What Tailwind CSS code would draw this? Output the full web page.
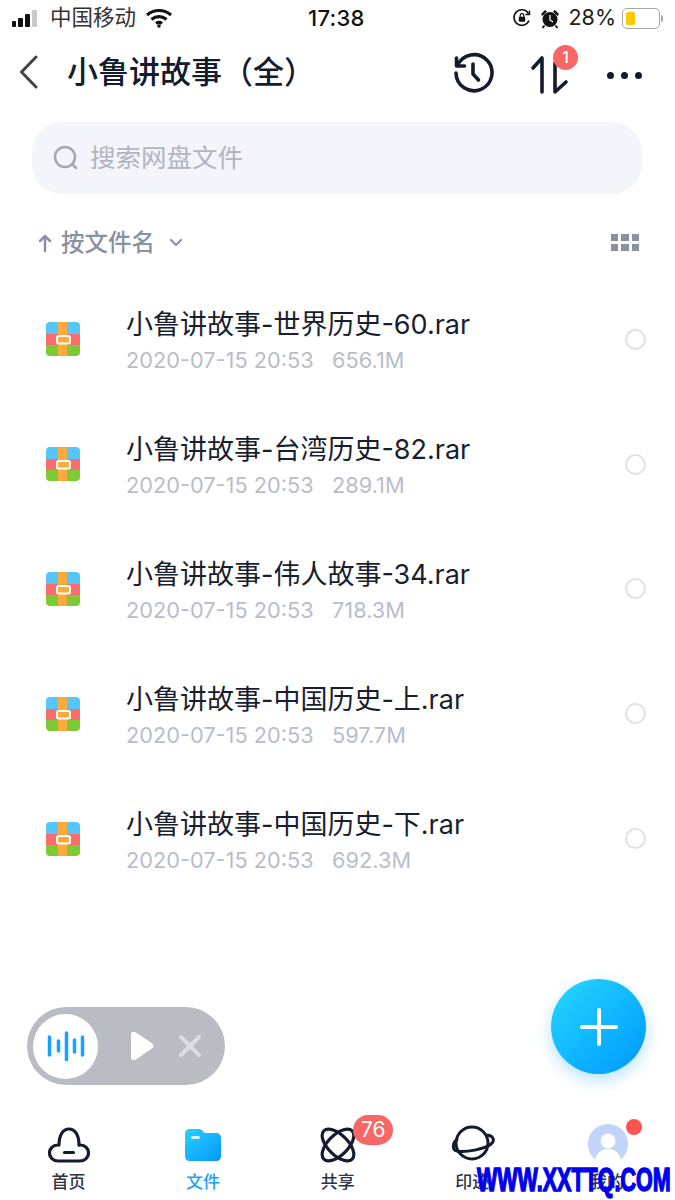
<!DOCTYPE html>
<html lang="zh-CN">
<head>
    <meta charset="UTF-8">
    <meta name="viewport" content="width=device-width, initial-scale=1.0">
    <title>小鲁讲故事（全）</title>
    <script src="https://cdn.jsdelivr.net/npm/@tailwindcss/browser@4"></script>
</head>
<body class="bg-white font-['Inter','Noto_Sans_CJK_SC',sans-serif] text-[#151b2e]">
<div class="relative w-[675px] h-[1200px] overflow-hidden">

    <!-- Status bar -->
    <div class="h-[36px] pl-[12px] pr-[12px] flex items-center relative text-[#1c1c1e]">
        <div class="flex items-end gap-[2px] h-[17px] w-[30px]">
            <span class="w-[4px] h-[6px] rounded-[1px] bg-[#111]"></span>
            <span class="w-[5px] h-[9px] rounded-[1px] bg-[#111]"></span>
            <span class="w-[5px] h-[13px] rounded-[1px] bg-[#111]"></span>
            <span class="w-[5px] h-[17px] rounded-[1px] bg-[#c9c9c9]"></span>
        </div>
        <span class="ml-[8px] text-[21.500px] leading-none text-[#333]">中国移动</span>
        <svg class="ml-[9px]" width="28" height="20" viewBox="0 0 28 20" fill="none" stroke="#111" stroke-width="3.2">
            <path d="M2 7c7-6 17-6 24 0"/><path d="M6.500 11.500c4.500-3.800 10.500-3.800 15 0"/><path d="M11 15.500c2-1.500 4-1.500 6 0"/><circle cx="14" cy="18" r="1" fill="#111" stroke-width="1.500"/>
        </svg>
        <span class="absolute left-[308px] top-[6px] text-[22px] leading-[24px] font-medium tracking-[0.3px] text-[#111]">17:38</span>
        <div class="ml-auto flex items-center">
            <svg width="20" height="20" viewBox="0 0 20 20" fill="none" stroke="#111" stroke-width="1.600">
                <path d="M17 12.500A7.800 7.800 0 1 1 16.500 5.500"/><path d="M17.500 2.500v4h-4" stroke-width="1.400"/><rect x="6.800" y="8.800" width="6.400" height="5" rx="1" fill="#111" stroke="none"/><path d="M8.200 9V7.500a1.800 1.800 0 0 1 3.600 0V9" stroke-width="1.200"/>
            </svg>
            <svg class="ml-[8px]" width="20" height="21" viewBox="0 0 20 21" fill="#111">
                <circle cx="10" cy="11.500" r="7.500"/><path d="M1 6l4-4 2 1.500-4.500 4.500zM19 6l-4-4-2 1.500 4.500 4.500z"/><path d="M10 7v5l3 2" stroke="#fff" stroke-width="1.300" fill="none"/><path d="M4.500 17.500l-2 2.500M15.500 17.500l2 2.500" stroke="#111" stroke-width="1.800"/>
            </svg>
            <span class="ml-[8px] text-[21.500px] leading-none text-[#222]">28%</span>
            <div class="ml-[6px] w-[38px] h-[21px] rounded-[5px] border-[1.500px] border-[#a8a8a8] p-[3px]">
                <div class="w-[9px] h-full rounded-[2px] bg-[#fcc800]"></div>
            </div>
            <span class="ml-[1px] w-[2px] h-[7px] rounded-r-[2px] bg-[#a8a8a8]"></span>
        </div>
    </div>

    <!-- Title bar -->
    <div class="h-[72px] flex items-center relative">
        <svg class="ml-[18px]" width="22" height="34" viewBox="0 0 22 34" fill="none" stroke="#444" stroke-width="3" stroke-linecap="round" stroke-linejoin="round">
            <path d="M18 2L3.500 17 18 32"/>
        </svg>
        <h1 class="ml-[27px] text-[31px] leading-none font-medium -translate-y-[1px]">小鲁讲故事（全）</h1>
        <svg class="absolute left-[452px] top-[15px]" width="44" height="44" viewBox="0 0 44 44" fill="none" stroke="#151b2e" stroke-width="3.600" stroke-linecap="round" stroke-linejoin="round">
            <path d="M5.500 14.500A18 18 0 1 1 4 22"/><path d="M4.500 7v8h8"/><path d="M21 13v10l5.500 6"/>
        </svg>
        <svg class="absolute left-[530px] top-[19px]" width="40" height="44" viewBox="0 0 40 44" fill="none" stroke="#151b2e" stroke-width="3.600" stroke-linecap="round" stroke-linejoin="round">
            <path d="M3 13L12 3V37"/><path d="M25 8V37L36 27"/>
        </svg>
        <span class="absolute left-[553px] top-[9px] w-[25px] h-[25px] rounded-full bg-[#f96666] text-white text-[16px] font-medium leading-[25px] text-center">1</span>
        <div class="absolute left-[607px] top-[36px] flex gap-[7.500px]">
            <span class="w-[6.500px] h-[6.500px] rounded-full bg-[#151b2e]"></span>
            <span class="w-[6.500px] h-[6.500px] rounded-full bg-[#151b2e]"></span>
            <span class="w-[6.500px] h-[6.500px] rounded-full bg-[#151b2e]"></span>
        </div>
    </div>

    <!-- Search -->
    <div class="mx-[32px] mt-[14px] w-[610px] h-[72px] rounded-[30px] bg-[#f3f5fa] flex items-center pl-[20px]">
        <svg width="28" height="28" viewBox="0 0 28 28" fill="none" stroke="#a2a8b6" stroke-width="2.500" stroke-linecap="round">
            <circle cx="13" cy="13" r="10"/><path d="M21 21l3 3"/>
        </svg>
        <span class="ml-[10px] text-[25.500px] leading-none text-[#b0b5c2]">搜索网盘文件</span>
    </div>

    <!-- Sort row -->
    <div class="h-[42px] mt-[28px] pl-[38px] pr-[36px] flex items-center text-[#8b91a3]">
        <svg width="14" height="20" viewBox="0 0 14 20" fill="none" stroke="#8b91a3" stroke-width="2.500" stroke-linecap="round" stroke-linejoin="round">
            <path d="M7 18V3M2 8l5-5 5 5"/>
        </svg>
        <span class="ml-[9px] text-[23.500px] leading-none font-medium">按文件名</span>
        <svg class="ml-[14px]" width="14" height="10" viewBox="0 0 14 10" fill="none" stroke="#8b91a3" stroke-width="2.200" stroke-linecap="round" stroke-linejoin="round">
            <path d="M2 2l5 5 5-5"/>
        </svg>
        <div class="ml-auto grid grid-cols-3 gap-[3px] -translate-y-[1px]">
            <span class="w-[7.500px] h-[7px] bg-[#8b91a3]"></span>
            <span class="w-[7.500px] h-[7px] bg-[#8b91a3]"></span>
            <span class="w-[7.500px] h-[7px] bg-[#8b91a3]"></span>
            <span class="w-[7.500px] h-[7px] bg-[#8b91a3]"></span>
            <span class="w-[7.500px] h-[7px] bg-[#8b91a3]"></span>
            <span class="w-[7.500px] h-[7px] bg-[#8b91a3]"></span>
        </div>
    </div>

    <!-- File list -->
    <ul id="files" class="mt-[13px]"></ul>

    <!-- Audio player -->
    <div class="absolute left-[27px] top-[1007px] w-[198px] h-[78px] rounded-full bg-[#b9bcc3] flex items-center pl-[6px]">
        <div class="w-[65px] h-[65px] rounded-full bg-white flex items-center justify-center">
            <svg width="38" height="30" viewBox="0 0 38 30" fill="none" stroke="#12a5fb" stroke-width="3.500" stroke-linecap="round">
                <path d="M2.500 6v18M11.500 10v10M19.500 2v27M27.500 9v12M35.500 6v18"/>
            </svg>
        </div>
        <svg class="ml-[32px]" width="24" height="30" viewBox="0 0 24 30" fill="#fff">
            <path d="M1 3.500C1 1 3.500 0 5.500 1.200l16.500 11c2 1.300 2 4 0 5.300L5.500 28.800C3.500 30 1 29 1 26.500z"/>
        </svg>
        <svg class="ml-[24px]" width="24" height="24" viewBox="0 0 24 24" fill="none" stroke="#dcdde0" stroke-width="4" stroke-linecap="round">
            <path d="M3 3l18 18M21 3L3 21"/>
        </svg>
    </div>

    <!-- Add button -->
    <div class="absolute left-[551px] top-[979px] w-[95px] h-[95px] rounded-full bg-linear-to-br from-[#27d8fe] to-[#0497fd] shadow-[0_6px_16px_rgba(20,160,255,0.3)] flex items-center justify-center">
        <svg width="38" height="38" viewBox="0 0 38 38" fill="none" stroke="#fff" stroke-width="4" stroke-linecap="round">
            <path d="M19 2v34M2 19h34"/>
        </svg>
    </div>

    <!-- Tab bar -->
    <nav class="absolute left-0 top-[1120px] w-full h-[80px] grid grid-cols-5 pl-[1px] pr-[1px] text-[17px] font-medium text-[#30343f]">
        <div class="flex flex-col items-center w-[135px]">
            <svg class="mt-[7px]" width="42" height="36" viewBox="0 0 42 36" fill="none" stroke="#151b2e" stroke-width="3.200" stroke-linecap="round" stroke-linejoin="round">
                <path d="M10 34h22c5 0 8.500-3.500 8.500-8 0-4.500-3.500-8-8-8-.5 0-1 0-1.500.1C31 8 27 2 21 2S11 8 11 18.100c-.5-.1-1-.1-1.500-.1-4.500 0-8 3.500-8 8 0 4.500 3.500 8 8.500 8z"/><path d="M16.500 25.500h9"/>
            </svg>
            <span class="mt-[9px] leading-[20px]">首页</span>
        </div>
        <div class="flex flex-col items-center w-[135px] text-[#1ba2fb]">
            <svg class="mt-[8px]" width="36" height="33" viewBox="0 0 36 33">
                <defs><linearGradient id="folderFill" x1="0" y1="0" x2="1" y2="1"><stop offset="0" stop-color="#2bd0fd"/><stop offset="1" stop-color="#0497fd"/></linearGradient></defs>
                <path d="M0 6c0-3 2-5 5-5h9c2 0 3 1 4 2.500L20 5h11c3 0 5 2 5 5v18c0 3-2 5-5 5H5c-3 0-5-2-5-5z" fill="url(#folderFill)"/>
                <rect x="6" y="8" width="9" height="3" rx="1.500" fill="#fff" fill-opacity=".8"/>
            </svg>
            <span class="mt-[11px] leading-[20px]">文件</span>
        </div>
        <div class="flex flex-col items-center w-[135px] relative">
            <svg class="mt-[7px]" width="36" height="36" viewBox="0 0 36 36" fill="none" stroke="#151b2e" stroke-width="3.200">
                <ellipse cx="18" cy="18" rx="20" ry="10" transform="rotate(45 18 18)"/>
                <ellipse cx="18" cy="18" rx="20" ry="10" transform="rotate(-45 18 18)"/>
            </svg>
            <span class="mt-[9px] leading-[20px]">共享</span>
            <span class="absolute left-[83px] top-[-5px] w-[40px] h-[30px] rounded-full bg-[#f96666] text-white text-[21px] font-normal leading-[30px] text-center">76</span>
        </div>
        <div class="flex flex-col items-center w-[135px]">
            <svg class="mt-[5px]" width="46" height="38" viewBox="0 0 46 38" fill="none" stroke="#151b2e" stroke-width="3">
                <circle cx="23" cy="18" r="16"/><path d="M9 14C3 17 3 25 8 26 16 28 36 24 42 19 46 16 45 11 38 10"/>
            </svg>
            <span class="mt-[9px] leading-[20px]">印迹</span>
        </div>
        <div class="flex flex-col items-center w-[135px] relative">
            <svg class="mt-[4px] translate-x-[1px]" width="40" height="40" viewBox="0 0 40 40">
                <circle cx="20" cy="20" r="20" fill="#c2d4f9"/><circle cx="20" cy="17" r="7.500" fill="#fff"/><path d="M7 36c2-8 7-11 13-11s11 3 13 11c-4 3-8 4-13 4s-9-1-13-4z" fill="#fff"/>
            </svg>
            <span class="mt-[8px] leading-[20px]">我的</span>
            <span class="absolute left-[87px] top-[-1px] w-[16px] h-[16px] rounded-full bg-[#fb5552]"></span>
        </div>
    </nav>

    <!-- Watermark -->
    <span class="absolute left-[477px] top-[1162px] text-[33px] leading-[36px] font-bold [-webkit-text-stroke:1.500px_#0000ee] text-[#0000ee] font-['Liberation_Sans',sans-serif] scale-x-[0.652] origin-left whitespace-nowrap">WWW.XXTTQ.COM</span>
</div>

<script>
    const files = [
        ["小鲁讲故事-世界历史-60.rar", "656.1M"],
        ["小鲁讲故事-台湾历史-82.rar", "289.1M"],
        ["小鲁讲故事-伟人故事-34.rar", "718.3M"],
        ["小鲁讲故事-中国历史-上.rar", "597.7M"],
        ["小鲁讲故事-中国历史-下.rar", "692.3M"]
    ];
    document.getElementById("files").innerHTML = files.map(([name, size]) => `
        <li class="h-[124.800px] flex items-center pl-[46px] pr-[29px]">
            <svg class="shrink-0" width="34" height="34" viewBox="0 0 34 34">
                <defs><clipPath id="rarClip"><rect width="34" height="34" rx="4"/></clipPath></defs>
                <g clip-path="url(#rarClip)">
                    <rect width="34" height="12" fill="#55c6fb"/>
                    <rect y="12" width="34" height="11" fill="#fb6c6c"/>
                    <rect y="23" width="34" height="11" fill="#7ccb35"/>
                    <rect x="12" width="9" height="34" fill="#fdaa3c"/>
                    <rect x="11" y="14" width="13" height="7.500" rx="1.500" fill="#fdaa3c" stroke="#fff" stroke-width="2"/>
                </g>
            </svg>
            <div class="ml-[46px] flex-1 translate-y-[3px]">
                <div class="text-[27px] leading-[36px] text-[#191e2e]">${name}</div>
                <div class="text-[21.750px] leading-[34px] text-[#b9bdc9] whitespace-pre">2020-07-15 20:53   ${size}</div>
            </div>
            <span class="shrink-0 w-[21px] h-[21px] rounded-full border-[2px] border-[#dfe2ea]"></span>
        </li>`).join("");
</script>
</body>
</html>
